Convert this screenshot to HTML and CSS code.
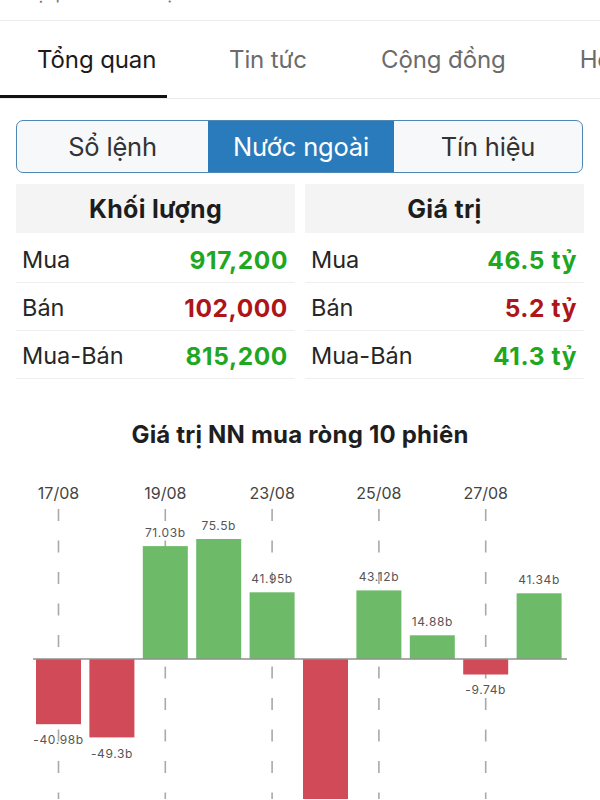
FILE: index.html
```html
<!DOCTYPE html>
<html lang="vi">
<head>
<meta charset="utf-8">
<title>Nước ngoài</title>
<link rel="stylesheet" href="styles.css">
</head>
<body>
<div class="page">
  <div class="topbar"><span class="topbar-text">ại phần Quân đội</span></div>

  <nav class="tabs">
    <div class="tab active">Tổng quan</div>
    <div class="tab">Tin tức</div>
    <div class="tab">Cộng đồng</div>
    <div class="tab">Hồ sơ</div>
  </nav>

  <div class="segment">
    <div class="seg">Sổ lệnh</div>
    <div class="seg on">Nước ngoài</div>
    <div class="seg">Tín hiệu</div>
  </div>

  <div class="stats">
    <div class="col">
      <div class="col-head">Khối lượng</div>
      <div class="row"><span class="lbl">Mua</span><span class="val up">917,200</span></div>
      <div class="row"><span class="lbl">Bán</span><span class="val down">102,000</span></div>
      <div class="row"><span class="lbl">Mua-Bán</span><span class="val up">815,200</span></div>
    </div>
    <div class="col">
      <div class="col-head">Giá trị</div>
      <div class="row"><span class="lbl">Mua</span><span class="val up">46.5 tỷ</span></div>
      <div class="row"><span class="lbl">Bán</span><span class="val down">5.2 tỷ</span></div>
      <div class="row"><span class="lbl">Mua-Bán</span><span class="val up">41.3 tỷ</span></div>
    </div>
  </div>

  <h2 class="chart-title">Giá trị NN mua ròng 10 phiên</h2>

  <div class="chart">
    <svg width="600" height="330" viewBox="0 0 600 330" xmlns="http://www.w3.org/2000/svg">
      <g class="dates">
        <text x="58.5" y="30">17/08</text>
        <text x="165.3" y="30">19/08</text>
        <text x="272.1" y="30">23/08</text>
        <text x="378.9" y="30">25/08</text>
        <text x="485.7" y="30">27/08</text>
      </g>
      <g class="grid">
        <line x1="58.5" y1="40" x2="58.5" y2="330"/>
        <line x1="165.3" y1="40" x2="165.3" y2="330"/>
        <line x1="272.1" y1="40" x2="272.1" y2="330"/>
        <line x1="378.9" y1="40" x2="378.9" y2="330"/>
        <line x1="485.7" y1="40" x2="485.7" y2="330"/>
      </g>
      <g class="bars">
        <rect class="neg" x="36" y="190" width="45" height="65.2"/>
        <rect class="neg" x="89.4" y="190" width="45" height="78.4"/>
        <rect class="pos" x="142.8" y="77.1" width="45" height="112.9"/>
        <rect class="pos" x="196.2" y="70" width="45" height="120"/>
        <rect class="pos" x="249.6" y="123.3" width="45" height="66.7"/>
        <rect class="neg" x="303" y="190" width="45" height="150"/>
        <rect class="pos" x="356.4" y="121.4" width="45" height="68.6"/>
        <rect class="pos" x="409.8" y="166.3" width="45" height="23.7"/>
        <rect class="neg" x="463.2" y="190" width="45" height="15.5"/>
        <rect class="pos" x="516.6" y="124.3" width="45" height="65.7"/>
      </g>
      <line class="axis" x1="33" y1="190" x2="567" y2="190"/>
      <g class="vals">
        <text x="58.5" y="275">-40.98b</text>
        <text x="111.9" y="289">-49.3b</text>
        <text x="165.3" y="68">71.03b</text>
        <text x="218.7" y="61">75.5b</text>
        <text x="272.1" y="114">41.95b</text>
        <text x="378.9" y="112">43.12b</text>
        <text x="432.3" y="157">14.88b</text>
        <text x="485.7" y="225">-9.74b</text>
        <text x="539.1" y="115">41.34b</text>
      </g>
    </svg>
  </div>
</div>
</body>
</html>
```

FILE: styles.css
```css
* { box-sizing: border-box; }
html, body { margin: 0; padding: 0; background: #fff; }
body {
  font-family: Inter, "Noto Sans", "Liberation Sans", sans-serif;
  color: #222;
  overflow: hidden;
  width: 600px;
  height: 800px;
}
.page { width: 600px; }

.topbar {
  height: 21px;
  border-bottom: 1px solid #ececec;
  overflow: hidden;
}
.topbar-text {
  display: block;
  margin-top: -17px;
  padding-left: 36px;
  font-size: 18px;
  color: #777;
  line-height: 20px;
  white-space: nowrap;
}

.tabs {
  display: flex;
  height: 78px;
  border-bottom: 1px solid #ececec;
  white-space: nowrap;
  overflow: hidden;
}
.tab {
  font-size: 24px;
  color: #6b6b6b;
  line-height: 24px;
  padding-top: 27px;
  flex: none;
  margin-left: 74px;
  letter-spacing: -0.1px;
}
.tab.active {
  color: #1b1b1b;
  width: 167px;
  padding-left: 37px;
  margin-left: 0;
  border-bottom: 3px solid #111;
}
.tab.active + .tab { margin-left: 62px; }

.segment {
  margin: 21px 17px 0 16px;
  height: 53px;
  border: 1.5px solid #4f87b4;
  border-radius: 7px;
  overflow: hidden;
  display: grid;
  grid-template-columns: 191px 186px 1fr;
  background: #f7f8f9;
}
.seg {
  display: flex;
  align-items: center;
  justify-content: center;
  font-size: 25.5px;
  color: #333;
  letter-spacing: -0.2px;
}
.seg.on {
  background: #2a7bbb;
  color: #fff;
}

.stats {
  display: grid;
  grid-template-columns: 279px 279px;
  column-gap: 10px;
  margin: 11px 16px 0 16px;
}
.col-head {
  height: 49px;
  background: #f4f4f4;
  display: flex;
  align-items: center;
  justify-content: center;
  font-size: 25px;
  font-weight: 700;
  color: #1d1d1d;
  margin-bottom: 2px;
  letter-spacing: 0.3px;
}
.row {
  height: 48px;
  display: flex;
  align-items: center;
  justify-content: space-between;
  padding: 2px 7px 0 6px;
  border-bottom: 1px solid #efefef;
  font-size: 23.5px;
}
.lbl { color: #262626; }
.val { font-weight: 700; letter-spacing: 0.6px; font-size: 24.5px; }
.val.up { color: #1fa71f; }
.val.down { color: #ad1519; }

.chart-title {
  margin: 42px 0 0 0;
  height: 48px;
  text-align: center;
  font-size: 24px;
  font-weight: 700;
  color: #1e1e1e;
  line-height: 28px;
  letter-spacing: 0.2px;
}

.chart { height: 330px; overflow: hidden; }
.chart svg { display: block; }
.dates text {
  font-family: Inter, "Noto Sans", sans-serif;
  font-size: 16px;
  fill: #444;
  text-anchor: middle;
}
.grid line {
  stroke: #a9a9a9;
  stroke-width: 1.6;
  stroke-dasharray: 12 19.5;
}
.bars .pos { fill: #6dbb69; }
.bars .neg { fill: #d14a58; }
.axis { stroke: #8f8f8f; stroke-width: 1.5; }
.vals text {
  font-family: Inter, "Noto Sans", sans-serif;
  font-size: 12px;
  fill: #555;
  text-anchor: middle;
  letter-spacing: 0.6px;
}
```
